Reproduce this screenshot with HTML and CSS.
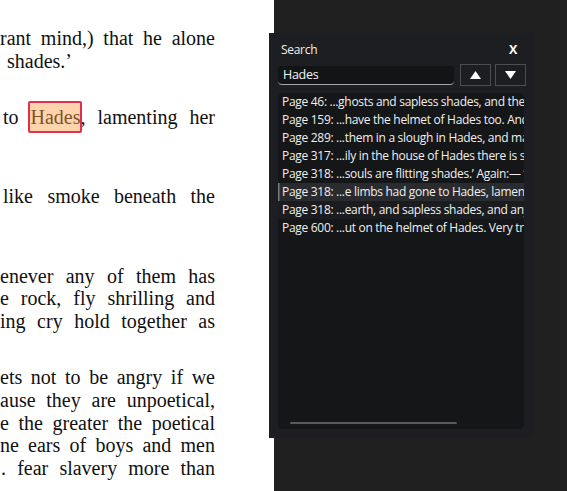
FILE: index.html
```html
<!DOCTYPE html>
<html lang="en">
<head>
<meta charset="utf-8">
<title>Reader – Search</title>
<link rel="stylesheet" href="styles.css">
</head>
<body>
<div class="app">
  <main class="page">
    <div class="col">
      <div class="para">
        <div class="ln just">rant mind,) that he alone</div>
        <div class="ln tail">shades.’</div>
      </div>
      <div class="para">
        <div class="ln just pad3">to <span class="hl">Hades</span>, lamenting her</div>
        <div class="ln">&nbsp;</div>
      </div>
      <div class="para">
        <div class="ln just pad3">like smoke beneath the</div>
        <div class="ln">&nbsp;</div>
      </div>
      <div class="para">
        <div class="ln just">enever any of them has</div>
        <div class="ln just">e rock, fly shrilling and</div>
        <div class="ln just">ing cry hold together as</div>
      </div>
      <div class="para">
        <div class="ln just">ets not to be angry if we</div>
        <div class="ln just">ause they are unpoetical,</div>
        <div class="ln just">e the greater the poetical</div>
        <div class="ln just">ne ears of boys and men</div>
        <div class="ln just pad1">. fear slavery more than</div>
      </div>
    </div>
  </main>
  <aside class="dark"></aside>

  <section class="search">
    <header class="search-head">
      <span class="search-title">Search</span>
      <span class="close">X</span>
    </header>
    <div class="search-bar">
      <div class="field"><span class="field-text">Hades</span></div>
      <button class="nav-btn" type="button" aria-label="Previous">
        <svg width="11" height="8" viewBox="0 0 11 8"><polygon points="5.5,0 11,8 0,8" fill="#fff"/></svg>
      </button>
      <button class="nav-btn" type="button" aria-label="Next">
        <svg width="11" height="8" viewBox="0 0 11 8"><polygon points="0,0 11,0 5.5,8" fill="#fff"/></svg>
      </button>
    </div>
    <div class="results">
      <div class="row">Page 46: ...ghosts and sapless shades, and the mind which</div>
      <div class="row">Page 159: ...have the helmet of Hades too. And now</div>
      <div class="row">Page 289: ...them in a slough in Hades, and may be</div>
      <div class="row">Page 317: ...ily in the house of Hades there is soul</div>
      <div class="row">Page 318: ...souls are flitting shades.’ Again:— ‘The</div>
      <div class="row selected">Page 318: ...e limbs had gone to Hades, lamenting</div>
      <div class="row hover">Page 318: ...earth, and sapless shades, and anyone</div>
      <div class="row">Page 600: ...ut on the helmet of Hades. Very true</div>
      <div class="hscroll"></div>
    </div>
  </section>
</div>
</body>
</html>
```

FILE: styles.css
```css
html, body {
  margin: 0;
  padding: 0;
}

body {
  background: #202020;
}

.app {
  position: relative;
  display: flex;
  width: 567px;
  height: 491px;
  overflow: hidden;
}

/* ---------- page text ---------- */
.page {
  flex: none;
  width: 274px;
  background: #ffffff;
  overflow: hidden;
}

.col {
  width: 215px;
  padding-top: 27px;
  font-family: "Liberation Serif", "Times New Roman", serif;
  font-size: 20px;
  line-height: 22.6px;
  color: #111111;
}

.para + .para {
  margin-top: 34px;
}

.ln {
  white-space: nowrap;
}

.ln.just {
  text-align: justify;
  text-align-last: justify;
  white-space: normal;
}

.ln.tail {
  padding-left: 7px;
}

.ln.pad3 {
  padding-left: 3px;
}

.ln.pad1 {
  padding-left: 1px;
}

.hl {
  position: relative;
}

.hl::after {
  content: "";
  position: absolute;
  left: -3px;
  right: -1px;
  top: -5px;
  bottom: -5px;
  background: rgba(250, 160, 70, 0.45);
  border: 2px solid #e0304e;
  border-radius: 2px;
}

/* ---------- dark side ---------- */
.dark {
  flex: 1;
  background: #202020;
}

/* ---------- search panel ---------- */
.search {
  position: absolute;
  left: 269px;
  top: 33px;
  width: 264px;
  height: 405px;
  box-sizing: border-box;
  padding: 8px 7px 9px 9px;
  background: #1d1e21;
  display: flex;
  flex-direction: column;
  gap: 7px;
  font-family: "Open Sans", "Noto Sans", sans-serif;
  font-size: 12px;
  letter-spacing: -0.3px;
  color: #f0f0f0;
}

.search-head {
  display: flex;
  justify-content: space-between;
  align-items: center;
  height: 16px;
  padding: 0 9px 0 3px;
}

.search-title {
  font-size: 12px;
}

.close {
  font-weight: 700;
  font-size: 12.5px;
  color: #ffffff;
}

.search-bar {
  display: flex;
  align-items: center;
  gap: 6px;
  height: 22px;
}

.field {
  width: 176px;
  height: 19px;
  box-sizing: border-box;
  background: #131416;
  border-radius: 4px;
  border-bottom: 1.5px solid #a8a8a8;
  padding-left: 5px;
  display: flex;
  align-items: center;
}

.field-text {
  font-size: 12.5px;
  color: #f4f4f4;
}

.nav-btn {
  width: 31px;
  height: 22px;
  box-sizing: border-box;
  border: 1px solid #4e4e4e;
  background: transparent;
  padding: 0;
  display: flex;
  align-items: center;
  justify-content: center;
  margin: 0;
}

.nav-btn + .nav-btn {
  margin-left: -2px;
}

.results {
  position: relative;
  flex: 1;
  width: 246px;
  background: #151618;
  border-radius: 5px;
  overflow: hidden;
}

.row {
  height: 18px;
  line-height: 18px;
  padding-left: 4px;
  white-space: nowrap;
  color: #f0f0f0;
}

.row.selected {
  background: #2a2b2e;
  box-shadow: inset 1.5px 0 0 #7c7c7c;
}

.row.hover {
  background: #1b1c1f;
}

.hscroll {
  position: absolute;
  left: 12px;
  bottom: 5px;
  width: 167px;
  height: 2px;
  border-radius: 1px;
  background: #5a5a5a;
}
```
